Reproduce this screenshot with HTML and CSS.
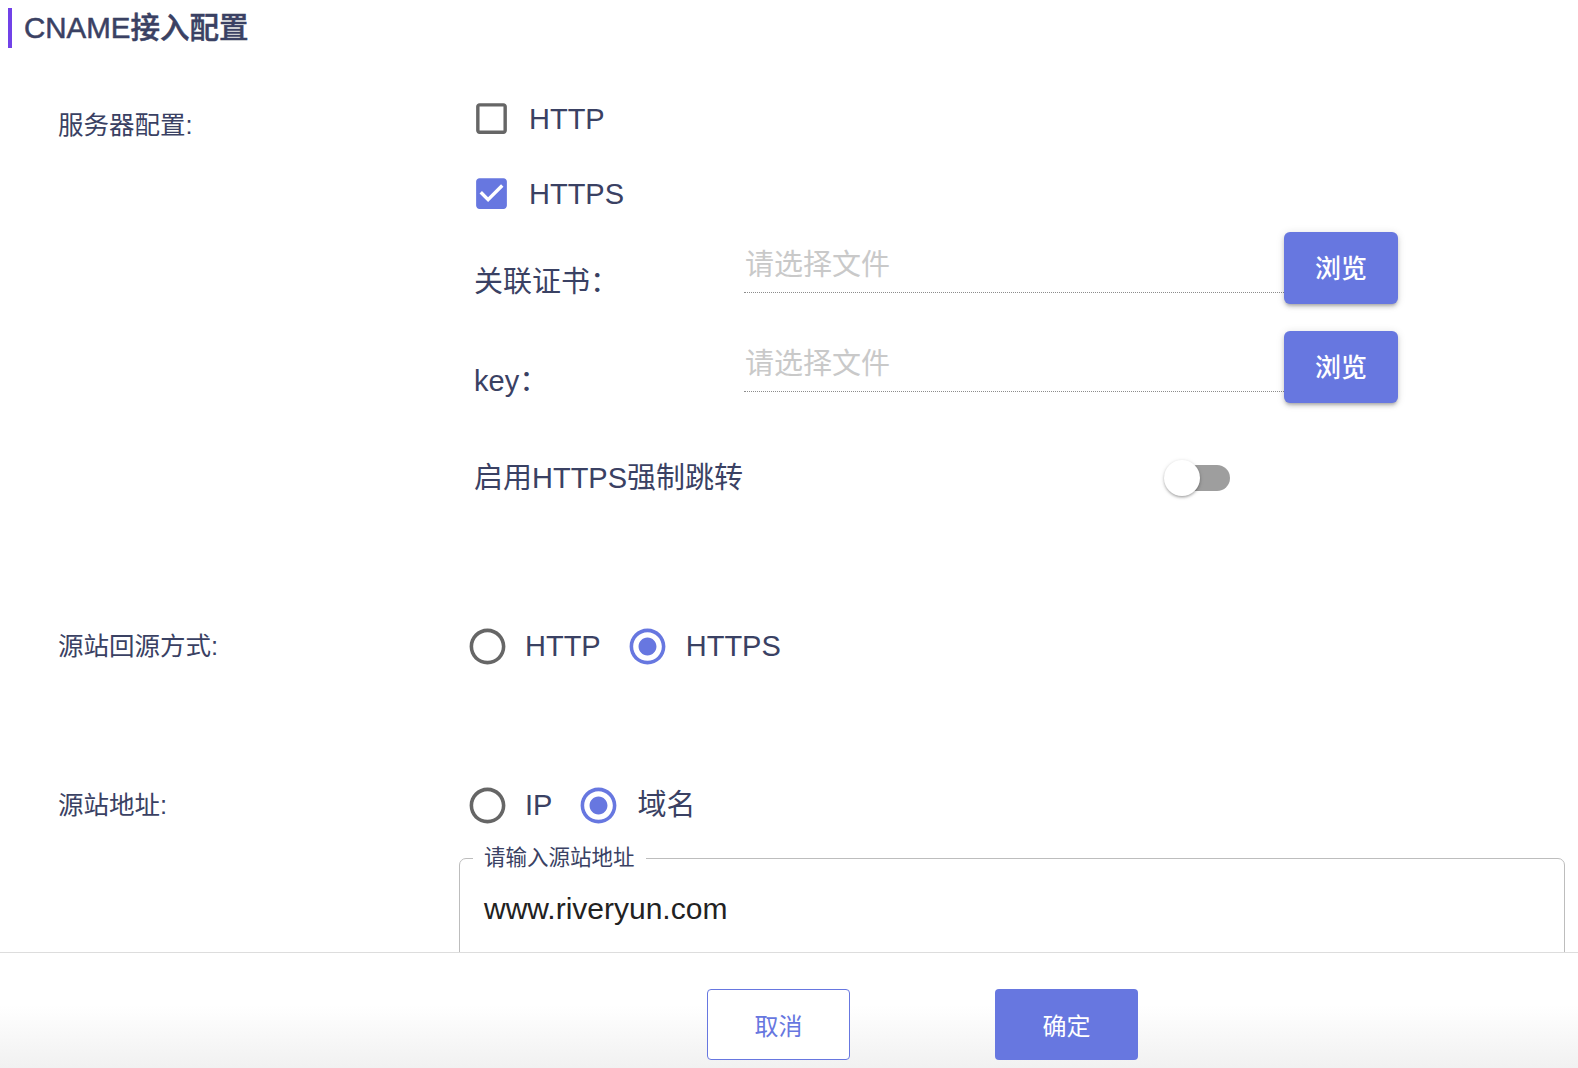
FILE: index.html
```html
<!DOCTYPE html>
<html lang="zh-CN">
<head>
<meta charset="utf-8">
<title>CNAME接入配置</title>
<link rel="stylesheet" href="styles.css">
</head>
<body>
<div class="page">
  <div class="main">
    <div class="title">
      <span class="title-bar"></span>
      <h1 class="title-text">CNAME接入配置</h1>
    </div>

    <div class="row row-server">
      <div class="row-label label-top">服务器配置:</div>
      <div class="row-content">
        <label class="check">
          <svg class="check-icon" viewBox="0 0 24 24"><path fill="#666666" d="M19 5v14H5V5h14m0-2H5c-1.1 0-2 .9-2 2v14c0 1.1.9 2 2 2h14c1.1 0 2-.9 2-2V5c0-1.1-.9-2-2-2z"/></svg>
          <span class="opt-text">HTTP</span>
        </label>
        <label class="check">
          <svg class="check-icon" viewBox="0 0 24 24"><path fill="#6777e0" d="M19 3H5c-1.11 0-2 .9-2 2v14c0 1.1.89 2 2 2h14c1.11 0 2-.9 2-2V5c0-1.1-.89-2-2-2zm-9 14l-5-5 1.41-1.41L10 14.170l7.59-7.59L19 8l-9 9z"/></svg>
          <span class="opt-text">HTTPS</span>
        </label>

        <div class="file-row">
          <div class="sub-label">关联证书：</div>
          <div class="file-input"><span class="placeholder">请选择文件</span></div>
          <button class="btn-browse">浏览</button>
        </div>
        <div class="file-row file-row-key">
          <div class="sub-label">key：</div>
          <div class="file-input"><span class="placeholder">请选择文件</span></div>
          <button class="btn-browse">浏览</button>
        </div>

        <div class="switch-row">
          <span class="switch-label">启用HTTPS强制跳转</span>
          <span class="switch">
            <span class="switch-track"></span>
            <span class="switch-thumb"></span>
          </span>
        </div>
      </div>
    </div>

    <div class="row row-radio row-origin">
      <div class="row-label">源站回源方式:</div>
      <div class="row-content radio-group">
        <label class="radio">
          <svg class="radio-icon" viewBox="0 0 24 24"><path fill="#666666" d="M12 2C6.480 2 2 6.48 2 12s4.48 10 10 10 10-4.48 10-10S17.52 2 12 2zm0 18c-4.42 0-8-3.58-8-8s3.58-8 8-8 8 3.58 8 8-3.58 8-8 8z"/></svg>
          <span class="opt-text">HTTP</span>
        </label>
        <label class="radio">
          <svg class="radio-icon" viewBox="0 0 24 24"><path fill="#6777e0" d="M12 7c-2.76 0-5 2.24-5 5s2.24 5 5 5 5-2.24 5-5-2.24-5-5-5zm0-5C6.48 2 2 6.48 2 12s4.48 10 10 10 10-4.48 10-10S17.52 2 12 2zm0 18c-4.42 0-8-3.58-8-8s3.58-8 8-8 8 3.58 8 8-3.58 8-8 8z"/></svg>
          <span class="opt-text">HTTPS</span>
        </label>
      </div>
    </div>

    <div class="row row-radio row-address">
      <div class="row-label">源站地址:</div>
      <div class="row-content radio-group">
        <label class="radio">
          <svg class="radio-icon" viewBox="0 0 24 24"><path fill="#666666" d="M12 2C6.48 2 2 6.48 2 12s4.48 10 10 10 10-4.48 10-10S17.52 2 12 2zm0 18c-4.42 0-8-3.58-8-8s3.58-8 8-8 8 3.58 8 8-3.58 8-8 8z"/></svg>
          <span class="opt-text">IP</span>
        </label>
        <label class="radio">
          <svg class="radio-icon" viewBox="0 0 24 24"><path fill="#6777e0" d="M12 7c-2.76 0-5 2.24-5 5s2.24 5 5 5 5-2.24 5-5-2.24-5-5-5zm0-5C6.48 2 2 6.48 2 12s4.48 10 10 10 10-4.48 10-10S17.52 2 12 2zm0 18c-4.42 0-8-3.58-8-8s3.58-8 8-8 8 3.58 8 8-3.58 8-8 8z"/></svg>
          <span class="opt-text">域名</span>
        </label>
      </div>
    </div>

    <div class="row row-field">
      <div class="row-label"></div>
      <fieldset class="outlined">
        <legend class="outlined-legend">请输入源站地址</legend>
        <div class="outlined-value">www.riveryun.com</div>
      </fieldset>
    </div>
  </div>

  <div class="footer">
    <button class="btn btn-cancel">取消</button>
    <button class="btn btn-ok">确定</button>
  </div>
</div>
</body>
</html>
```

FILE: styles.css
```css
* {
  box-sizing: border-box;
}

html, body {
  margin: 0;
  padding: 0;
  background: #ffffff;
}

body {
  font-family: "Liberation Sans", "Noto Sans CJK SC", sans-serif;
  color: #3a4163;
}

.page {
  height: 1068px;
  display: flex;
  flex-direction: column;
  overflow: hidden;
}

.main {
  height: 952px;
  flex-shrink: 0;
  overflow: hidden;
}

/* Title */
.title {
  display: flex;
  align-items: center;
  padding: 8px 0 0 8px;
  height: 48px;
}

.title-bar {
  width: 4px;
  height: 40px;
  background: #7142e8;
}

.title-text {
  margin: 0 0 0 12px;
  font-size: 29.5px;
  line-height: 40px;
  font-weight: 500;
  font-family: "Liberation Sans", "Noto Sans CJK SC", sans-serif;
  color: #3a4163;
  -webkit-text-stroke: 0.5px #3a4163;
}

/* Rows */
.row {
  display: flex;
  padding-left: 58px;
}

.row-label {
  width: 408px;
  flex-shrink: 0;
  font-size: 25.5px;
  line-height: 32px;
  color: #3a4163;
}

.row-content {
  flex: 1;
}

.row-server {
  padding-top: 33px;
}

.label-top {
  margin-top: 28px;
}

/* Checkbox */
.check {
  display: flex;
  align-items: center;
  height: 75px;
  padding-left: 5px;
}

.check-icon {
  width: 41px;
  height: 41px;
  flex-shrink: 0;
}

.check .opt-text {
  margin-left: 17px;
}

.opt-text {
  font-size: 29px;
  line-height: 34px;
  color: #3a4163;
}

/* File rows */
.file-row {
  display: flex;
  align-items: stretch;
  height: 72px;
  margin-top: 1px;
  margin-left: 8px;
  width: 924px;
}

.file-row-key {
  margin-top: 27px;
}

.sub-label {
  width: 270px;
  flex-shrink: 0;
  align-self: flex-end;
  font-size: 29px;
  line-height: 34px;
  padding-bottom: 5px;
  color: #3a4163;
}

.file-input {
  flex: 1;
  height: 61px;
  border-bottom: 1px dotted #8c8c8c;
  display: flex;
  align-items: center;
  padding-top: 5px;
  padding-left: 1px;
}

.placeholder {
  font-size: 29px;
  line-height: 34px;
  color: #c9c9c9;
}

.btn-browse {
  width: 114px;
  height: 72px;
  flex-shrink: 0;
  border: none;
  border-radius: 6px;
  background: #6777e0;
  color: #ffffff;
  font-family: "Liberation Sans", "Noto Sans CJK SC", sans-serif;
  font-size: 26px;
  font-weight: 500;
  box-shadow: 0 3px 3px -2px rgba(0,0,0,.2), 0 3px 4px 0 rgba(0,0,0,.14), 0 1px 8px 0 rgba(0,0,0,.12);
  padding: 0 0 4px 0;
}

/* Switch */
.switch-row {
  display: flex;
  align-items: center;
  height: 50px;
  margin-top: 50px;
  margin-left: 8px;
  width: 756px;
}

.switch-label {
  font-size: 29px;
  line-height: 34px;
  color: #3a4163;
}

.switch {
  position: relative;
  margin-left: auto;
  width: 66px;
  height: 50px;
}

.switch-track {
  position: absolute;
  left: 4px;
  top: 12px;
  width: 62px;
  height: 26px;
  border-radius: 13px;
  background: #9e9e9e;
}

.switch-thumb {
  position: absolute;
  left: 0;
  top: 7px;
  width: 36px;
  height: 36px;
  border-radius: 50%;
  background: #ffffff;
  box-shadow: 0 2px 3px -1px rgba(0,0,0,.25), 0 1px 3px 0 rgba(0,0,0,.14), 0 1px 5px 0 rgba(0,0,0,.1);
}

/* Radio rows */
.row-radio {
  align-items: center;
  height: 48px;
}

.row-origin {
  margin-top: 119px;
}

.row-address {
  margin-top: 111px;
}

.radio-group {
  display: flex;
  align-items: center;
}

.radio {
  display: flex;
  align-items: center;
}

.radio + .radio {
  margin-left: 25px;
}

.radio-icon {
  width: 43px;
  height: 43px;
  flex-shrink: 0;
}

.radio .opt-text {
  margin-left: 16px;
}

.radio + .radio .opt-text {
  margin-left: 17px;
}

/* Outlined field */
.row-field {
  margin-top: 16px;
}

.row-field .row-label {
  width: 401px;
}

.outlined {
  margin: 0;
  width: 1106px;
  height: 140px;
  border: 1px solid #bdbdbd;
  border-radius: 7px;
  padding: 0 13px;
}

.outlined-legend {
  padding: 0 11px;
  font-size: 21.5px;
  line-height: 26px;
  color: #3a4163;
}

.outlined-value {
  margin-top: 20px;
  margin-left: 11px;
  font-size: 30px;
  line-height: 36px;
  color: #222222;
}

/* Footer */
.footer {
  flex: 1;
  border-top: 1px solid #dddddd;
  background: linear-gradient(to bottom, #ffffff 0%, #ffffff 45%, #f1f1f1 100%);
  display: flex;
  align-items: flex-start;
  padding-top: 36px;
  padding-left: 707px;
}

.btn {
  width: 143px;
  height: 71px;
  border-radius: 4px;
  font-family: "Liberation Sans", "Noto Sans CJK SC", sans-serif;
  font-size: 24px;
  padding: 0;
}

.btn-cancel {
  background: #ffffff;
  border: 1px solid #6777e0;
  color: #6777e0;
}

.btn-ok {
  margin-left: 145px;
  background: #6777e0;
  border: none;
  color: #ffffff;
}
```
